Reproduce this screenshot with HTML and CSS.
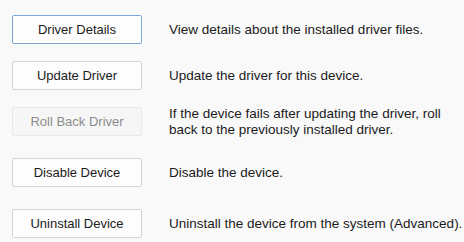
FILE: index.html
```html
<!DOCTYPE html>
<html>
<head>
<meta charset="utf-8">
<link rel="stylesheet" href="styles.css">
</head>
<body>
<div class="panel">
  <div class="row">
    <button class="btn btn-default">Driver Details</button>
    <div class="desc">View details about the installed driver files.</div>
  </div>
  <div class="row">
    <button class="btn">Update Driver</button>
    <div class="desc">Update the driver for this device.</div>
  </div>
  <div class="row">
    <button class="btn btn-disabled" disabled>Roll Back Driver</button>
    <div class="desc">If the device fails after updating the driver, roll back to the previously installed driver.</div>
  </div>
  <div class="row row-spaced">
    <button class="btn">Disable Device</button>
    <div class="desc">Disable the device.</div>
  </div>
  <div class="row row-spaced">
    <button class="btn">Uninstall Device</button>
    <div class="desc">Uninstall the device from the system (Advanced).</div>
  </div>
</div>
</body>
</html>
```
FILE: styles.css
```css
html, body {
  margin: 0;
  padding: 0;
  background: #f9f9f9;
}
body {
  font-family: "Liberation Sans", Arial, sans-serif;
  font-size: 13.5px;
  color: #1b1b1b;
}
.panel {
  display: flex;
  flex-direction: column;
  gap: 17px;
  padding: 15px 0 0 12px;
}
.row {
  display: flex;
  align-items: center;
  gap: 27px;
  height: 29px;
}
.row-spaced {
  margin-top: 5px;
}
.btn {
  flex: none;
  width: 130px;
  height: 29px;
  box-sizing: border-box;
  border: 1px solid #d4d4d4;
  border-radius: 2px;
  background: #fdfdfd;
  font-family: inherit;
  font-size: 13px;
  color: #1b1b1b;
  padding: 0;
}
.btn-default {
  border-color: #7aa7d6;
}
.btn-disabled {
  background: #f6f6f6;
  border-color: #e8e8e8;
  color: #8c8c8c;
}
.desc {
  flex: 1;
  min-width: 0;
  line-height: 16px;
}
```
